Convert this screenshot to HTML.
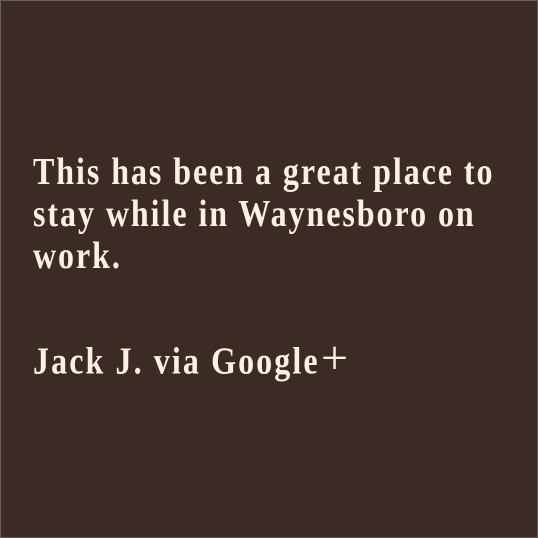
<!DOCTYPE html>
<html><head><style>
html,body{margin:0;padding:0;}
body{width:538px;height:538px;background:#3c2a24;box-sizing:border-box;border:1px solid #6a5e5a;position:relative;overflow:hidden;}
.l{position:absolute;left:32px;font-family:"Liberation Serif",serif;font-weight:bold;font-size:32px;line-height:42px;height:42px;color:#fbf1e2;letter-spacing:1.95px;white-space:nowrap;transform:scaleY(1.2);transform-origin:0 50%;}
.p{font-weight:normal;font-size:40px;display:inline-block;transform:scaleX(1.2);transform-origin:0 50%;margin-left:1px;}
</style></head><body>
<div class="l" style="top:149px">This has been a great place to</div>
<div class="l" style="top:191px">stay while in Waynesboro on</div>
<div class="l" style="top:233px">work.</div>
<div class="l" style="top:336px;letter-spacing:2.1px">Jack J. via Google<span class="p">+</span></div>
</body></html>
